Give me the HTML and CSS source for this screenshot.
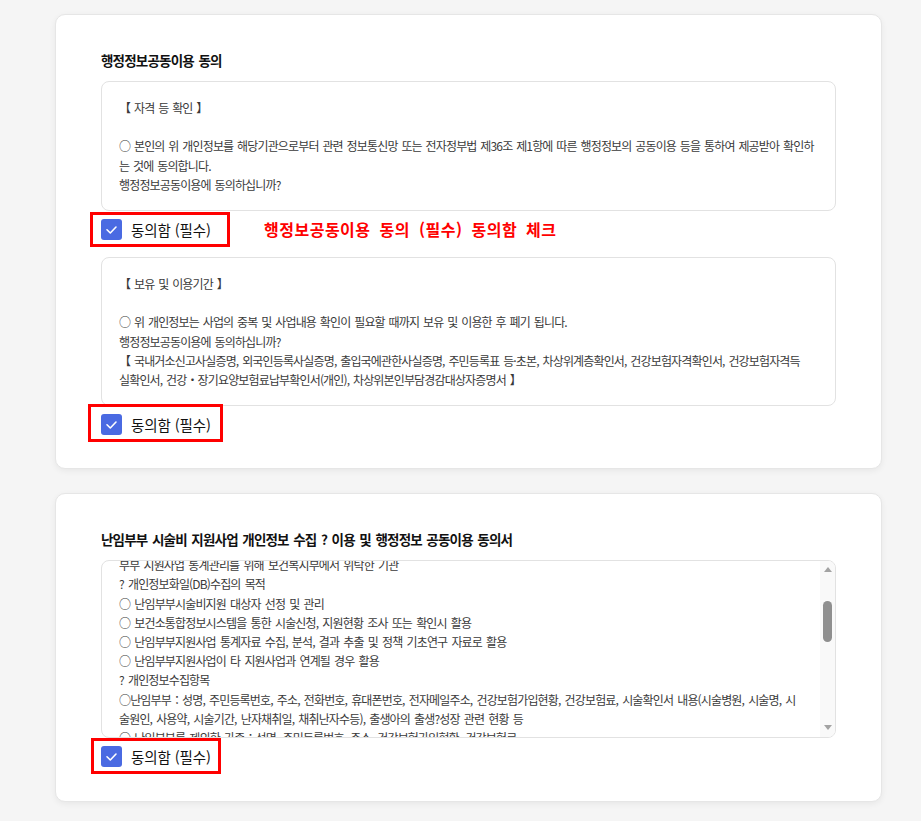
FILE: index.html
```html
<!DOCTYPE html>
<html lang="ko">
<head>
<meta charset="utf-8">
<title>동의서</title>
<link rel="stylesheet" href="styles.css">
</head>
<body>
<main class="page">
  <section class="card">
    <h2 class="card-title">행정정보공동이용 동의</h2>
    <div class="terms">
      <p>【 자격 등 확인 】</p>
      <p>&nbsp;</p>
      <p>○ 본인의 위 개인정보를 해당기관으로부터 관련 정보통신망 또는 전자정부법 제36조 제1항에 따른 행정정보의 공동이용 등을 통하여 제공받아 확인하<br>는 것에 동의합니다.</p>
      <p>행정정보공동이용에 동의하십니까?</p>
    </div>
    <div class="agree">
      <span class="check"><svg width="21" height="21" viewBox="0 0 21 21"><polyline points="6,10.8 9.3,14 15,8" fill="none" stroke="#fff" stroke-width="1.6" stroke-linecap="round" stroke-linejoin="round"/></svg></span>
      <span class="agree-text">동의함 (필수)</span>
      <span class="mark mark-a"></span>
      <span class="note">행정보공동이용 동의 (필수) 동의함 체크</span>
    </div>
    <div class="terms terms-next">
      <p>【 보유 및 이용기간 】</p>
      <p>&nbsp;</p>
      <p>○ 위 개인정보는 사업의 중복 및 사업내용 확인이 필요할 때까지 보유 및 이용한 후 폐기 됩니다.</p>
      <p>행정정보공동이용에 동의하십니까?</p>
      <p>【 국내거소신고사실증명, 외국인등록사실증명, 출입국에관한사실증명, 주민등록표 등·초본, 차상위계층확인서, 건강보험자격확인서, 건강보험자격득<br>실확인서, 건강・장기요양보험료납부확인서(개인), 차상위본인부담경감대상자증명서 】</p>
    </div>
    <div class="agree">
      <span class="check"><svg width="21" height="21" viewBox="0 0 21 21"><polyline points="6,10.8 9.3,14 15,8" fill="none" stroke="#fff" stroke-width="1.6" stroke-linecap="round" stroke-linejoin="round"/></svg></span>
      <span class="agree-text">동의함 (필수)</span>
      <span class="mark mark-b"></span>
    </div>
  </section>

  <section class="card card-last">
    <h2 class="card-title">난임부부 시술비 지원사업 개인정보 수집 ? 이용 및 행정정보 공동이용 동의서</h2>
    <div class="scrollbox">
      <div class="scroll-content">
        <p class="scrolled">부부 지원사업 통계관리를 위해 보건복지부에서 위탁한 기관</p>
        <p>? 개인정보화일(DB)수집의 목적</p>
        <p>○ 난임부부시술비지원 대상자 선정 및 관리</p>
        <p>○ 보건소통합정보시스템을 통한 시술신청, 지원현황 조사 또는 확인시 활용</p>
        <p>○ 난임부부지원사업 통계자료 수집, 분석, 결과 추출 및 정책 기초연구 자료로 활용</p>
        <p>○ 난임부부지원사업이 타 지원사업과 연계될 경우 활용</p>
        <p>? 개인정보수집항목</p>
        <p>○난임부부：성명, 주민등록번호, 주소, 전화번호, 휴대폰번호, 전자메일주소, 건강보험가입현황, 건강보험료, 시술확인서 내용(시술병원, 시술명, 시<br>술원인, 사용약, 시술기간, 난자채취일, 채취난자수등), 출생아의 출생?성장 관련 현황 등</p>
        <p>○ 난임부부를 제외한 가족：성명, 주민등록번호, 주소, 건강보험가입현황, 건강보험료</p>
        <p>? 개인정보의 보유 및 이용기간</p>
      </div>
      <div class="scrollbar" aria-hidden="true">
        <span class="arrow arrow-up"></span>
        <span class="thumb"></span>
        <span class="arrow arrow-down"></span>
      </div>
    </div>
    <div class="agree">
      <span class="check"><svg width="21" height="21" viewBox="0 0 21 21"><polyline points="6,10.8 9.3,14 15,8" fill="none" stroke="#fff" stroke-width="1.6" stroke-linecap="round" stroke-linejoin="round"/></svg></span>
      <span class="agree-text">동의함 (필수)</span>
      <span class="mark mark-c"></span>
    </div>
  </section>
</main>
</body>
</html>
```

FILE: styles.css
```css
html, body {
  margin: 0;
  padding: 0;
}

body {
  background: #f5f5f5;
  font-family: "Noto Sans CJK KR", "Noto Sans", sans-serif;
  color: #333;
}

.page {
  display: flex;
  flex-direction: column;
  gap: 24px;
  padding: 14px 0 24px 55px;
}

.card {
  box-sizing: border-box;
  width: 827px;
  background: #fff;
  border: 1px solid #e6e6e6;
  border-radius: 10px;
  box-shadow: 0 2px 6px rgba(0, 0, 0, 0.06);
  padding: 35px 45px 32px;
}

.card-last {
  padding-bottom: 33px;
}

.card-title {
  margin: 0 0 11px;
  font-size: 13.5px;
  font-weight: 700;
  line-height: 20px;
  letter-spacing: -0.8px;
  word-spacing: 1.5px;
  color: #111;
}

.terms {
  border: 1px solid #e2e2e2;
  border-radius: 8px;
  padding: 16px 17px;
  font-size: 12px;
  line-height: 19.2px;
  letter-spacing: -0.85px;
  word-spacing: 1.3px;
  white-space: nowrap;
  color: #3a3a3a;
}

.terms p,
.scroll-content p {
  margin: 0;
}

.terms-next {
  margin-top: 16px;
}

.agree {
  position: relative;
  display: flex;
  align-items: center;
  height: 24px;
  margin-top: 6px;
}

.check {
  display: flex;
  width: 21px;
  height: 21px;
  border-radius: 3px;
  background: #4a6ae2;
}

.agree-text {
  margin-left: 9px;
  font-size: 14.5px;
  letter-spacing: -0.1px;
  color: #111;
}

.mark {
  position: absolute;
  box-sizing: border-box;
  border: 3px solid #ff0000;
}

.mark-a {
  left: -11px;
  top: -5px;
  width: 140px;
  height: 35px;
}

.mark-b {
  left: -13px;
  top: -8px;
  width: 135px;
  height: 38px;
}

.mark-c {
  left: -10px;
  top: -6px;
  width: 130px;
  height: 36px;
}

.note {
  position: absolute;
  left: 163px;
  top: 0;
  font-size: 16px;
  font-weight: 700;
  letter-spacing: 0.5px;
  word-spacing: 4px;
  color: #ff0000;
  white-space: nowrap;
}

.scrollbox {
  display: flex;
  height: 176px;
  border: 1px solid #e2e2e2;
  border-radius: 8px;
  overflow: hidden;
}

.scroll-content {
  flex: 1;
  overflow: hidden;
  padding: 0 17px;
  font-size: 12px;
  line-height: 19.2px;
  letter-spacing: -0.85px;
  word-spacing: 1.6px;
  white-space: nowrap;
  color: #3a3a3a;
}

.scroll-content .scrolled {
  margin-top: -6px;
}

.scrollbar {
  display: flex;
  flex-direction: column;
  align-items: center;
  width: 15px;
  background: #f9f9f9;
}

.arrow {
  width: 0;
  height: 0;
  border-left: 4.5px solid transparent;
  border-right: 4.5px solid transparent;
}

.arrow-up {
  margin-top: 6px;
  border-bottom: 5px solid #a3a3a3;
}

.arrow-down {
  margin-top: auto;
  margin-bottom: 7px;
  border-top: 5px solid #a3a3a3;
}

.thumb {
  width: 9px;
  height: 41px;
  margin-top: 29px;
  border-radius: 5px;
  background: #8f8f8f;
}
```
